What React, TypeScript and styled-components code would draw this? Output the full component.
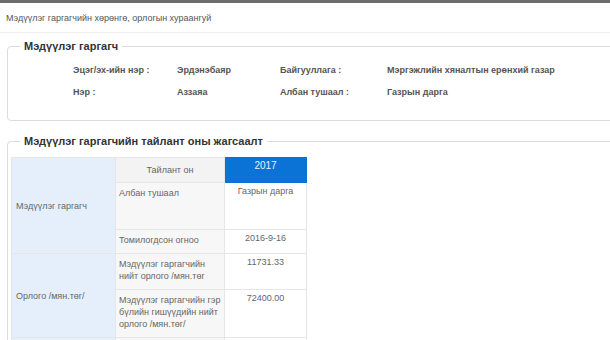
import React from "react";
import styled, { createGlobalStyle } from "styled-components";

const Global = createGlobalStyle`
  html, body { margin: 0; padding: 0; background: #ffffff; }
  body { font-family: "Liberation Sans", Arial, sans-serif; overflow: hidden; }
  #root { width: 610px; height: 340px; overflow: hidden; }
`;

const Page = styled.div`
  width: 610px;
  height: 340px;
  overflow: hidden;
  background: #fff;
`;

const TopBar = styled.div`
  height: 3px;
  background: #6c6c6c;
`;

const PageTitle = styled.div`
  height: 29px;
  padding: 0 6px;
  display: flex;
  align-items: center;
  font-size: 9px;
  color: #555;
  border-bottom: 1px solid #efefef;
`;

const Content = styled.div`
  padding-left: 7px;
`;

const Box = styled.fieldset<{ $top: number }>`
  margin: ${(p) => p.$top}px -20px 0 0;
  padding: 0 0 0 2px;
  border: 1px solid #dcdcdc;
  border-radius: 4px;
  min-width: 0;
`;

const Legend = styled.legend`
  margin-left: 10px;
  padding: 0 4px;
  font-size: 11px;
  line-height: 13px;
  font-weight: bold;
  color: #333;
`;

const InfoGrid = styled.div`
  display: grid;
  grid-template-columns: 104px 103px 107px 1fr;
  grid-auto-rows: 22px;
  align-items: center;
  padding: 6px 0 17px 63px;
  font-size: 9px;
  font-weight: bold;
  color: #555;
`;

const Table = styled.table`
  margin: 9px 0 0 1px;
  border-collapse: collapse;
  font-size: 9px;
  line-height: 12px;
  color: #666;
  table-layout: fixed;
`;

const GroupCell = styled.td`
  width: 99px;
  padding: 0 0 0 4px;
  background: #e5effb;
  border: 1px solid #e6e6e6;
  vertical-align: middle;
`;

const HeadLabel = styled.td`
  width: 108px;
  background: #f3f3f3;
  text-align: center;
  vertical-align: middle;
  border: 1px solid #e6e6e6;
  padding: 0;
`;

const YearCell = styled.td`
  width: 81px;
  background: #0b72d6;
  color: #e8f2ff;
  text-align: center;
  vertical-align: top;
  padding: 2px 0 0;
  border: 1px solid #0b72d6;
  font-size: 10px;
`;

const Row = styled.tr<{ $h: number }>`
  height: ${(p) => p.$h}px;
`;

const LabelCell = styled.td`
  background: #f7f7f7;
  vertical-align: top;
  padding: 4px 3px 0;
  border: 1px solid #e6e6e6;
`;

const ValueCell = styled.td`
  background: #fff;
  text-align: center;
  vertical-align: top;
  padding: 2px 0 0;
  border: 1px solid #e6e6e6;
`;

export default function App() {
  return (
    <Page>
      <Global />
      <TopBar />
      <PageTitle>Мэдүүлэг гаргагчийн хөрөнгө, орлогын хураангуй</PageTitle>
      <Content>
        <Box $top={7}>
          <Legend>Мэдүүлэг гаргагч</Legend>
          <InfoGrid>
            <span>Эцэг/эх-ийн нэр :</span>
            <span>Эрдэнэбаяр</span>
            <span>Байгууллага :</span>
            <span>Мэргэжлийн хяналтын ерөнхий газар</span>
            <span>Нэр :</span>
            <span>Аззаяа</span>
            <span>Албан тушаал :</span>
            <span>Газрын дарга</span>
          </InfoGrid>
        </Box>
        <Box $top={14}>
          <Legend>Мэдүүлэг гаргагчийн тайлант оны жагсаалт</Legend>
          <Table>
            <tbody>
              <Row $h={25}>
                <GroupCell rowSpan={3}>Мэдүүлэг гаргагч</GroupCell>
                <HeadLabel>Тайлант он</HeadLabel>
                <YearCell>2017</YearCell>
              </Row>
              <Row $h={47}>
                <LabelCell>Албан тушаал</LabelCell>
                <ValueCell>Газрын дарга</ValueCell>
              </Row>
              <Row $h={24}>
                <LabelCell>Томилогдсон огноо</LabelCell>
                <ValueCell>2016-9-16</ValueCell>
              </Row>
              <Row $h={36}>
                <GroupCell rowSpan={2}>Орлого /мян.төг/</GroupCell>
                <LabelCell>Мэдүүлэг гаргагчийн нийт орлого /мян.төг</LabelCell>
                <ValueCell>11731.33</ValueCell>
              </Row>
              <Row $h={48}>
                <LabelCell>
                  Мэдүүлэг гаргагчийн гэр бүлийн гишүүдийн нийт орлого /мян.төг/
                </LabelCell>
                <ValueCell>72400.00</ValueCell>
              </Row>
              <Row $h={40}>
                <GroupCell>&nbsp;</GroupCell>
                <LabelCell>&nbsp;</LabelCell>
                <ValueCell>&nbsp;</ValueCell>
              </Row>
            </tbody>
          </Table>
        </Box>
      </Content>
    </Page>
  );
}
